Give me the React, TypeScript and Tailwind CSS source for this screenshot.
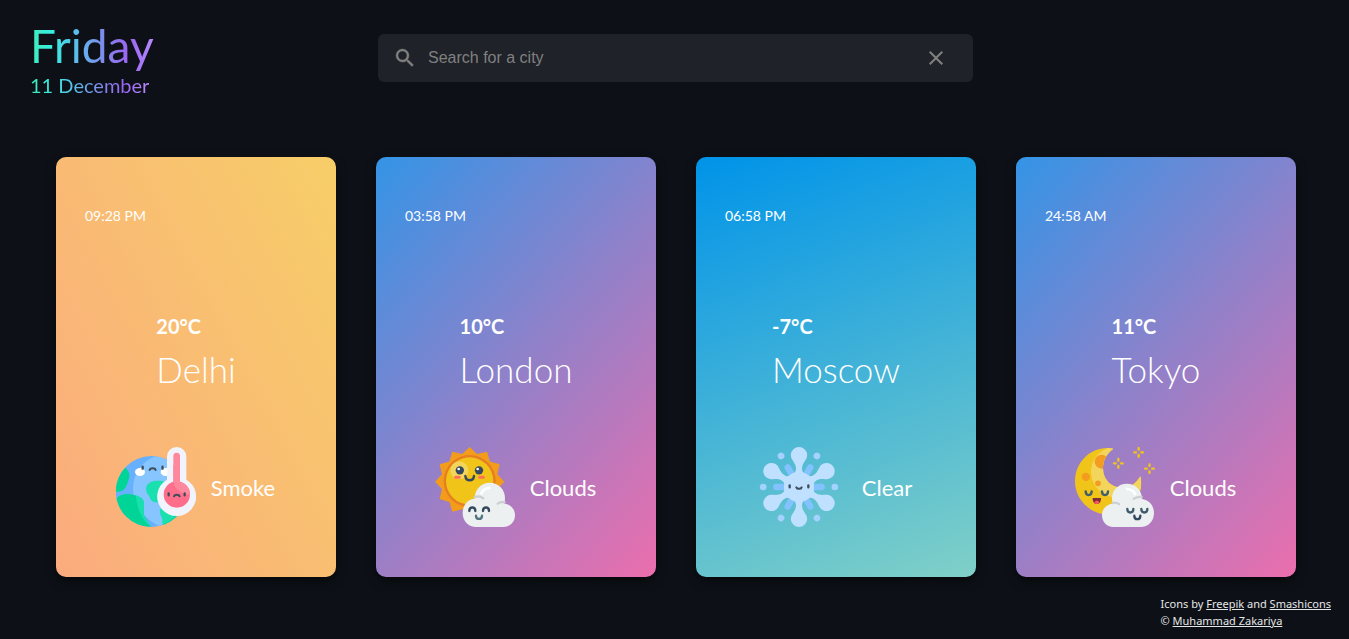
import type { ReactNode } from "react";

function GlobeIcon() {
  return (
    <svg viewBox="45 36 240 240" className="size-20" aria-hidden="true">
      <clipPath id="globe">
        <circle cx="151" cy="169.500" r="106.500" />
      </clipPath>
      <g clipPath="url(#globe)">
        <rect x="40" y="60" width="220" height="220" fill="#66b0fd" />
        <path d="M164 63C120 80 96 118 96 160c0 46 28 88 78 113l60-20 30-60V100l-50-40z" fill="#86c5ff" />
        <path d="M70 96c10 8 18 18 15 30-5 22-12 38-24 42-8 3-14 3-20 2V96z" fill="#00d597" />
        <path d="M40 200c8-16 22-24 43-23 12 1 22 4 34 10 10 5 13 14 12 28-2 12-3 24 6 36l16 28H80z" fill="#00d597" />
        <path d="M117 187c10 5 13 14 12 28-2 12-3 24 5 36l14 22c-26-17-38-50-44-92z" fill="#19e0ae" />
        <path d="M200 142c-12-4-26-6-40-4-14 3-25 11-25 24 0 8 3 14 9 20 4 12 10 19 20 20l30 4z" fill="#19e0ae" />
        <path d="M178 222c10-5 20-5 34-3l36 8-40 46-26-8c4-8 2-14-3-24-3-8-3-14-1-19z" fill="#19e0ae" />
        <path d="M183 270c20-8 36-20 50-40l20 8-20 36z" fill="#00d597" />
      </g>
      <ellipse cx="117" cy="111" rx="15" ry="12" fill="#fff" />
      <ellipse cx="194" cy="111" rx="15" ry="12" fill="#fff" />
      <path d="M125 95v6M184.500 95v6" stroke="#3e4d5c" strokeWidth="7" strokeLinecap="round" />
      <path d="M146 105c2-7 16-7 18 0" fill="none" stroke="#3e4d5c" strokeWidth="6" strokeLinecap="round" />
      <path d="M198 65a29 29 0 0 1 58 0v69a58.500 58.500 0 1 1-58 0z" fill="#f2f4fd" />
      <path d="M217 63a10 10 0 0 1 20 0v80h-20z" fill="#ff889e" />
      <circle cx="227.500" cy="178.500" r="39.500" fill="#ff6f8b" />
      <path d="M217 140.500V90h20v50.500c18 5 30 19 30 37-8 3-20 0-29-7-12-8-20-18-21-30z" fill="#ff889e" />
      <path d="M203 175v6M251 175v6" stroke="#3e4d5c" strokeWidth="7" strokeLinecap="round" />
      <path d="M219 184c2-6 15-6 17 0" fill="none" stroke="#3e4d5c" strokeWidth="6" strokeLinecap="round" />
    </svg>
  );
}

const sunRays = Array.from({ length: 24 }, (_, i) => {
  const radius = i % 2 === 0 ? 104 : 86;
  const angle = (i * Math.PI) / 12;
  return `${(134 + radius * Math.sin(angle)).toFixed(1)},${(140 - radius * Math.cos(angle)).toFixed(1)}`;
}).join(" ");

function SunCloudIcon() {
  return (
    <svg viewBox="30 36 240 240" className="size-20" aria-hidden="true">
      <polygon points={sunRays} fill="#f39c1c" />
      <circle cx="134" cy="138" r="78" fill="#e67e22" />
      <circle cx="134" cy="138" r="71" fill="#f0c419" />
      <circle cx="103" cy="106" r="27" fill="#f3d55b" />
      <circle cx="104.500" cy="106" r="12.500" fill="#35495e" />
      <circle cx="162" cy="106" r="12.500" fill="#35495e" />
      <circle cx="101" cy="102" r="4" fill="#fff" />
      <circle cx="158" cy="102" r="4" fill="#fff" />
      <path d="M92 127h11M164 127h11" stroke="#ff7058" strokeWidth="9" strokeLinecap="round" />
      <path d="M121 123c2 17 24 17 26 0" fill="none" stroke="#35495e" strokeWidth="7" strokeLinecap="round" />
      <path d="M154 276c-24 0-41-18-41-42 0-23 15-42 36-43 0-27 18-48 45-48s46 21 46 46c0 6-1 12-2 17 18 1 32 16 32 35 0 20-15 35-35 35z" fill="#ecf0f1" />
      <path d="M149 186c10-3 19-2 26 4M218 206c7-5 14-6 21-4" fill="none" stroke="#ccd0d2" strokeWidth="7" strokeLinecap="round" />
      <path d="M169 175c4-9 13-15 24-16" fill="none" stroke="#fff" strokeWidth="8" strokeLinecap="round" />
      <path d="M133 228c0-14 18-14 18 0M174 228c0-14 18-14 18 0" fill="none" stroke="#35495e" strokeWidth="7" strokeLinecap="round" />
      <path d="M153 242c0 13 18 13 18 0" fill="none" stroke="#547580" strokeWidth="7" strokeLinecap="round" />
    </svg>
  );
}

const turns = [0, 60, 120, 180, 240, 300];

function SnowflakeIcon() {
  return (
    <svg viewBox="39 36 240 240" className="mr-2 size-20" aria-hidden="true">
      {turns.map((turn) => (
        <g key={turn} transform={`rotate(${turn} 159 156)`}>
          <path d="M190 156h37" stroke="#82c3ff" strokeWidth="19" strokeLinecap="round" />
          <circle cx="266.500" cy="156" r="10" fill="#a4d2ff" />
        </g>
      ))}
      <circle cx="159" cy="156" r="45" fill="#c0e0ff" />
      {turns.map((turn) => (
        <path
          key={turn}
          transform={`rotate(${turn} 159 156)`}
          d="M134 119c10-2 16-8 16-18 0-9-4-16-10-25a24.500 24.500 0 1 1 38 0c-6 9-10 16-10 25 0 10 6 16 16 18l-25 37z"
          fill="#c0e0ff"
        />
      ))}
      <path d="M131 151v6M187 151v6" stroke="#3e4d5c" strokeWidth="7" strokeLinecap="round" />
      <path d="M151 157c2 6 14 6 16 0" fill="none" stroke="#3e4d5c" strokeWidth="6" strokeLinecap="round" />
    </svg>
  );
}

function Sparkle({ x, y }: { x: number; y: number }) {
  return (
    <path
      transform={`translate(${x} ${y})`}
      d="M0-13v5M0 8v5M-13 0h5M8 0h5"
      stroke="#f0c419"
      strokeWidth="7"
      strokeLinecap="round"
    />
  );
}

function MoonCloudIcon() {
  return (
    <svg viewBox="45 36 240 240" className="size-20" aria-hidden="true">
      <clipPath id="moon">
        <path d="M160 42c-20 14-31 34-31 58 0 34 24 58 58 58 24 0 41-12 54-34 4 12 4 30-1 46-14 42-52 68-96 68-54 0-99-44-99-99 0-56 44-100 97-100 8 0 14 1 18 3z" />
      </clipPath>
      <g clipPath="url(#moon)">
        <rect x="45" y="36" width="205" height="205" fill="#f0c419" />
        <path d="M146 38c-36 14-53 42-53 72 0 44 38 80 90 80l70-20V110l-60 40-50-40 20-74z" fill="#f3d55b" />
        <circle cx="125" cy="80" r="21" fill="#f39c1f" />
        <circle cx="77.500" cy="125.500" r="12.500" fill="#f39c1f" />
        <circle cx="114" cy="145" r="8.500" fill="#f39c1f" />
      </g>
      <path d="M77 169c0 15 18 15 18 0M126 169c0 15 18 15 18 0" fill="none" stroke="#3f5c6c" strokeWidth="7" strokeLinecap="round" />
      <path d="M98 189h25c0 11-4 18-12.500 18S98 200 98 189z" fill="#7d2b35" />
      <path d="M103 202c3-6 13-6 15 0-4 7-12 7-15 0z" fill="#ff5364" />
      <Sparkle x={175} y={85} />
      <Sparkle x={236} y={52} />
      <Sparkle x={268.5} y={101} />
      <path d="M160 276c-20 0-34-16-34-35s14-34 32-35c-1-5-2-10-2-16 0-25 19-44 45-44s45 20 45 46c21 2 36 20 36 42 0 25-17 42-40 42z" fill="#ecf0f1" />
      <path d="M158 204c7-2 13-1 19 3M221 191c7-4 15-6 24-5" fill="none" stroke="#ccd0d2" strokeWidth="7" strokeLinecap="round" />
      <path d="M201 162c12 1 20 6 24 15" fill="none" stroke="#fff" strokeWidth="8" strokeLinecap="round" />
      <path d="M202 222c0 14 18 14 18 0M244 222c0 14 18 14 18 0" fill="none" stroke="#3f5c6c" strokeWidth="7" strokeLinecap="round" />
      <path d="M223 242c0 14 18 14 18 0" fill="none" stroke="#35495e" strokeWidth="7" strokeLinecap="round" />
    </svg>
  );
}

type City = {
  name: string;
  time: string;
  temperature: string;
  condition: string;
  background: string;
  icon: ReactNode;
};

const cities: City[] = [
  {
    name: "Delhi",
    time: "09:28 PM",
    temperature: "20°C",
    condition: "Smoke",
    background: "bg-[linear-gradient(62deg,#fbab7e_0%,#f7ce68_100%)]",
    icon: <GlobeIcon />,
  },
  {
    name: "London",
    time: "03:58 PM",
    temperature: "10°C",
    condition: "Clouds",
    background: "bg-[linear-gradient(132deg,#3494e6_0%,#ec6ead_100%)]",
    icon: <SunCloudIcon />,
  },
  {
    name: "Moscow",
    time: "06:58 PM",
    temperature: "-7°C",
    condition: "Clear",
    background: "bg-[linear-gradient(160deg,#0093e9_0%,#80d0c7_100%)]",
    icon: <SnowflakeIcon />,
  },
  {
    name: "Tokyo",
    time: "24:58 AM",
    temperature: "11°C",
    condition: "Clouds",
    background: "bg-[linear-gradient(132deg,#3494e6_0%,#ec6ead_100%)]",
    icon: <MoonCloudIcon />,
  },
];

function CityCard({ city }: { city: City }) {
  return (
    <article
      className={`flex h-[420px] w-[280px] flex-col rounded-[10px] pt-12 text-white shadow-[0_4px_10px_rgba(0,0,0,0.6)] ${city.background}`}
    >
      <time className="px-[29px] text-sm leading-[22px]">{city.time}</time>
      <div className="mx-auto mt-[83px]">
        <p className="text-xl leading-8 font-bold">{city.temperature}</p>
        <h2 className="text-[35px] leading-[54px] font-light">{city.name}</h2>
      </div>
      <div className="mt-[51px] flex items-center justify-center gap-[15px] pr-px">
        {city.icon}
        <p className="pt-0.5 text-[22px] leading-8">{city.condition}</p>
      </div>
    </article>
  );
}

const gradientText =
  "w-fit bg-[linear-gradient(to_right,#3fecb8_0%,#38ede2_18%,#62b2ec_42%,#8a7cee_66%,#9b64f2_80%,#b78cff_100%)] bg-clip-text text-transparent";

export default function App() {
  return (
    <div className="flex min-h-screen flex-col bg-[#0d1117] font-['Lato',sans-serif]">
      <header className="grid grid-cols-[1fr_minmax(0,595px)_1fr] items-start pt-[19px] pr-7 pl-[30px]">
        <div>
          <h1 className={`text-[46px] leading-[54px] ${gradientText}`}>Friday</h1>
          <p className={`text-xl leading-6 ${gradientText}`}>11 December</p>
        </div>
        <form className="mt-[15px] flex h-12 items-center rounded-md bg-[#1f2228] pr-[25px] pl-[15px] text-[#808080]">
          <svg
            viewBox="0 0 24 24"
            className="size-6 shrink-0"
            fill="currentColor"
            stroke="currentColor"
            strokeWidth="0.4"
            aria-hidden="true"
          >
            <path d="M15.500 14h-.79l-.28-.27A6.471 6.471 0 0 0 16 9.500 6.500 6.500 0 1 0 9.500 16c1.610 0 3.090-.59 4.230-1.570l.27.28v.79l5 4.990L20.490 19l-4.990-5zm-6 0C7.010 14 5 11.990 5 9.500S7.010 5 9.500 5 14 7.010 14 9.500 11.990 14 9.500 14z" />
          </svg>
          <input
            type="text"
            aria-label="Search for a city"
            placeholder="Search for a city"
            className="mx-[11px] min-w-0 flex-1 bg-transparent font-['Liberation_Sans',sans-serif] text-base text-white outline-none placeholder:text-[#808080]"
          />
          <button type="reset" aria-label="Clear search" className="shrink-0">
            <svg viewBox="0 0 24 24" className="size-6" fill="currentColor" aria-hidden="true">
              <path d="M19 6.410 17.590 5 12 10.590 6.410 5 5 6.410 10.590 12 5 17.590 6.410 19 12 13.410 17.590 19 19 17.590 13.410 12z" />
            </svg>
          </button>
        </form>
      </header>

      <main className="mt-[60px] flex flex-wrap justify-center gap-10 pl-[3px]">
        {cities.map((city) => (
          <CityCard key={city.name} city={city} />
        ))}
      </main>

      <footer className="mt-[18px] mr-[18px] ml-auto font-['Noto_Sans',sans-serif] text-[11px] leading-[17px] text-[#e6e6e6]">
        <p>
          Icons by{" "}
          <a href="#freepik" className="underline">
            Freepik
          </a>{" "}
          and{" "}
          <a href="#smashicons" className="underline">
            Smashicons
          </a>
        </p>
        <p>
          ©{" "}
          <a href="#author" className="underline">
            Muhammad Zakariya
          </a>
        </p>
      </footer>
    </div>
  );
}
